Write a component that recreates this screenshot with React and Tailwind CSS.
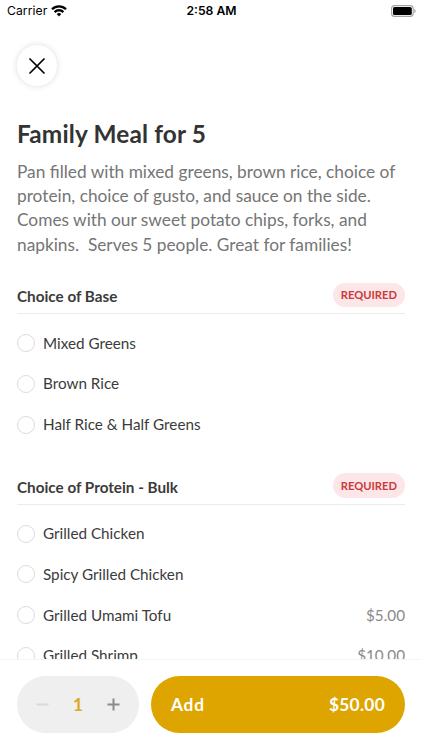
import React, { useState } from 'react';

const sections = [
  {
    id: 'base',
    title: 'Choice of Base',
    options: [{ name: 'Mixed Greens' }, { name: 'Brown Rice' }, { name: 'Half Rice & Half Greens' }]
  },
  {
    id: 'protein',
    title: 'Choice of Protein - Bulk',
    options: [
      { name: 'Grilled Chicken' },
      { name: 'Spicy Grilled Chicken' },
      { name: 'Grilled Umami Tofu', price: 5 },
      { name: 'Grilled Shrimp', price: 10 }
    ]
  }
];

const BASE_PRICE = 50;

const StatusBar = () => (
  <div className="h-[22px] shrink-0 grid grid-cols-3 items-center pl-[7px] pr-[6px] text-black font-['Inter',sans-serif]">
    <div className="flex items-center gap-1">
      <span className="text-[12.2px] leading-4 tracking-[0.05px]">Carrier</span>
      <svg width="16" height="12" viewBox="0 0 16 12" fill="none" stroke="currentColor" strokeWidth="2.3">
        <path d="M1 4.3a10 10 0 0 1 14 0" />
        <path d="M3.6 7.1a6.2 6.2 0 0 1 8.8 0" />
        <path d="M8 11.4 5.7 9.1a3.3 3.3 0 0 1 4.6 0z" fill="currentColor" stroke="none" />
      </svg>
    </div>
    <span className="text-center text-[12.2px] leading-4 font-semibold whitespace-nowrap">2:58 AM</span>
    <svg className="justify-self-end" width="25" height="12" viewBox="0 0 25 12">
      <rect x="0.6" y="0.6" width="21.6" height="10.8" rx="3" fill="none" stroke="#a3a3a3" strokeWidth="1.1" />
      <rect x="2" y="2" width="18.8" height="8" rx="1.6" fill="#000" />
      <path d="M23.3 4v4c.8-.3 1.4-1.1 1.4-2s-.6-1.7-1.4-2z" fill="#a3a3a3" />
    </svg>
  </div>
);

const Option = ({ option, selected, onSelect }) => (
  <button onClick={onSelect} className="flex w-full h-[40.7px] items-center text-left">
    <span className="flex w-[18px] h-[18px] shrink-0 items-center justify-center rounded-full border border-[#dcdcdc]">
      {selected && <span className="w-2.5 h-2.5 rounded-full bg-[#dea500]" />}
    </span>
    <span className="ml-2 flex-1 text-[15.25px] text-[#3b3b3b]">{option.name}</span>
    {option.price && <span className="text-[15.25px] text-[#8a8a8a]">${option.price.toFixed(2)}</span>}
  </button>
);

const App = () => {
  const [quantity, setQuantity] = useState(1);
  const [selected, setSelected] = useState({});

  const extras = sections.reduce((sum, s) => {
    const option = s.options.find(o => o.name === selected[s.id]);
    return sum + (option?.price || 0);
  }, 0);
  const total = (BASE_PRICE + extras) * quantity;

  return (
    <div className="h-screen w-full flex flex-col overflow-hidden bg-white font-['Lato',sans-serif]">
      <StatusBar />

      <main className="flex-1 min-h-0 overflow-hidden px-[17px] pt-[23px]">
        <button
          aria-label="Close"
          className="flex w-[40px] h-[41px] items-center justify-center rounded-full bg-white text-black shadow-[0_0_6px_rgba(0,0,0,0.14)]"
        >
          <svg width="16" height="16" viewBox="0 0 16 16" fill="none" stroke="currentColor" strokeWidth="1.7" strokeLinecap="round">
            <path d="M1 1l14 14M15 1 1 15" />
          </svg>
        </button>

        <h1 className="mt-[33px] text-[24.4px] leading-[30px] font-bold tracking-[0.15px] text-[#333]">Family Meal for 5</h1>
        <p className="mt-[10.5px] text-[17.3px] leading-[24.4px] text-[#757575] whitespace-pre">
          {'Pan filled with mixed greens, brown rice, choice of\nprotein, choice of gusto, and sauce on the side.\nComes with our sweet potato chips, forks, and\nnapkins.  Serves 5 people. Great for families!'}
        </p>

        <div className="mt-[25.5px] flex flex-col gap-[28.4px]">
          {sections.map(s => (
            <section key={s.id}>
              <div className="flex items-center justify-between border-b border-[#ebebeb] pb-[6px]">
                <h2 className="pt-[2px] text-[15.25px] leading-5 font-bold text-[#3b3b3b]">{s.title}</h2>
                <span className="flex h-[24.5px] items-center rounded-full bg-[#fde6e7] px-2 pt-px text-[11.2px] font-bold text-[#c93a3a]">
                  REQUIRED
                </span>
              </div>
              <div className="pt-[8.7px]">
                {s.options.map(o => (
                  <Option
                    key={o.name}
                    option={o}
                    selected={selected[s.id] === o.name}
                    onSelect={() => setSelected({ ...selected, [s.id]: o.name })}
                  />
                ))}
              </div>
            </section>
          ))}
        </div>
      </main>

      <footer className="flex h-[91px] shrink-0 gap-3 border-t border-[#f5f5f5] bg-white px-[17px] pt-4">
        <div className="flex h-[57px] w-[122px] items-center justify-between rounded-full bg-[#efefef] px-[19px]">
          <button aria-label="Decrease" onClick={() => setQuantity(Math.max(1, quantity - 1))} className="text-[#d8d8d8]">
            <svg width="13" height="13" viewBox="0 0 13 13" stroke="currentColor" strokeWidth="2">
              <path d="M0.5 6.5h12" />
            </svg>
          </button>
          <span className="pt-px text-[17.3px] font-bold text-[#dfa81c]">{quantity}</span>
          <button aria-label="Increase" onClick={() => setQuantity(quantity + 1)} className="text-[#8b8b8b]">
            <svg width="13" height="13" viewBox="0 0 13 13" stroke="currentColor" strokeWidth="2">
              <path d="M0.5 6.5h12M6.5 0.5v12" />
            </svg>
          </button>
        </div>
        <button className="flex h-[57px] flex-1 items-center justify-between rounded-full bg-[#dea500] px-5 pt-px text-[17.3px] font-bold text-white">
          <span className="tracking-[0.8px]">Add</span>
          <span className="tracking-[0.3px]">${total.toFixed(2)}</span>
        </button>
      </footer>
    </div>
  );
};

export default App;
